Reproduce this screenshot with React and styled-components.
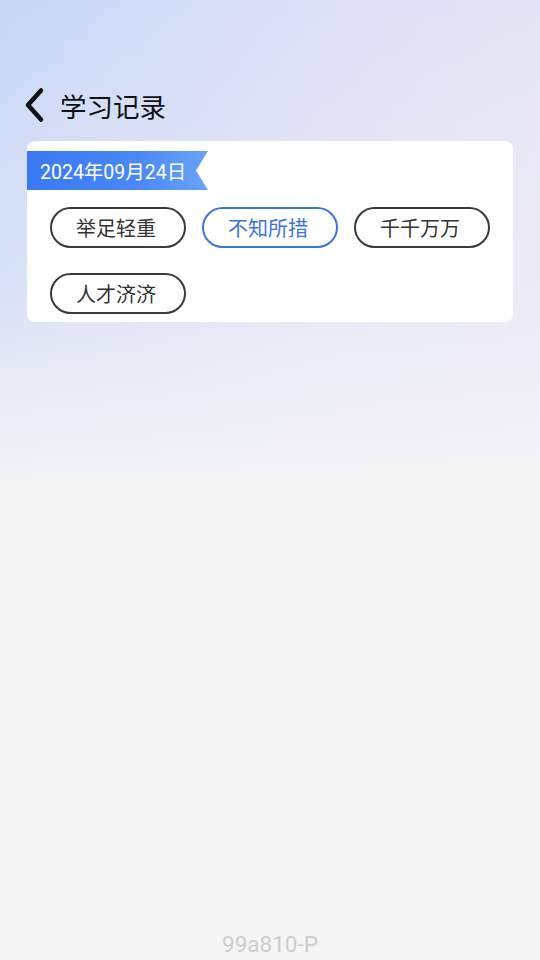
import styled, { createGlobalStyle } from "styled-components";

const GlobalStyle = createGlobalStyle`
  html, body {
    margin: 0;
    padding: 0;
    background: #f5f5f5;
    font-family: "Roboto", "Noto Sans CJK SC", sans-serif;
  }
`;

const Page = styled.div`
  min-height: 960px;
  display: flex;
  flex-direction: column;
  background:
    linear-gradient(to bottom, rgba(245,245,245,0) 0px, rgba(245,245,245,0.35) 300px, #f5f5f5 500px),
    linear-gradient(100deg, #c7d7f6 0%, #dfe2f6 50%, #ebe6f5 100%);
`;

const Header = styled.div`
  display: flex;
  align-items: center;
  gap: 12px;
  padding: 86px 0 0 23px;
  height: 38px;
`;

const BackIcon = styled.svg`
  width: 25px;
  height: 36px;
`;

const Title = styled.h1`
  margin: 0;
  font-family: "Noto Sans CJK SC", sans-serif;
  font-size: 26.5px;
  font-weight: 400;
  color: #111;
`;

const Card = styled.div`
  margin: 17px 27px 0 27px;
  background: #fff;
  border-radius: 8px;
  padding: 10px 0 8px 0;
`;

const Ribbon = styled.div`
  display: inline-flex;
  align-items: center;
  height: 39px;
  width: 181px;
  box-sizing: border-box;
  padding-left: 13px;
  color: #fff;
  font-family: "Roboto", "Noto Sans CJK SC", sans-serif;
  font-size: 19.5px;
  background: linear-gradient(90deg, #3a78f4 0%, #4a87f6 60%, #6aa2f9 100%);
  clip-path: polygon(0 0, 100% 0, calc(100% - 12px) 50%, 100% 100%, 0 100%);
`;

const TagGrid = styled.div`
  display: flex;
  flex-wrap: wrap;
  gap: 25px 16px;
  padding: 17px 23px 0 23px;
`;

const Tag = styled.div`
  width: 136px;
  height: 41px;
  box-sizing: border-box;
  border-radius: 21px;
  border: 2px solid ${(p) => (p.$active ? "#3b74de" : "#3a3a3a")};
  color: ${(p) => (p.$active ? "#3b74de" : "#333")};
  display: flex;
  align-items: center;
  justify-content: center;
  padding-right: 4px;
  font-family: "Noto Sans CJK SC", sans-serif;
  font-size: 20px;
`;

const Spacer = styled.div`
  flex: 1;
`;

const Footer = styled.div`
  text-align: center;
  color: #cdcdcd;
  font-family: "Roboto", sans-serif;
  font-size: 22.5px;
  padding-bottom: 2px;
  line-height: 28px;
`;

const tags = [
  { text: "举足轻重" },
  { text: "不知所措", active: true },
  { text: "千千万万" },
  { text: "人才济济" },
];

export default function App() {
  return (
    <>
      <GlobalStyle />
      <Page>
        <Header>
          <BackIcon viewBox="0 0 25 36">
            <path
              d="M18 3.5 L5 18 L18 32.5"
              fill="none"
              stroke="#111"
              strokeWidth="4.5"
              strokeLinecap="round"
              strokeLinejoin="round"
            />
          </BackIcon>
          <Title>学习记录</Title>
        </Header>
        <Card>
          <Ribbon>2024年09月24日</Ribbon>
          <TagGrid>
            {tags.map((t) => (
              <Tag key={t.text} $active={t.active}>
                {t.text}
              </Tag>
            ))}
          </TagGrid>
        </Card>
        <Spacer />
        <Footer>99a810-P</Footer>
      </Page>
    </>
  );
}
